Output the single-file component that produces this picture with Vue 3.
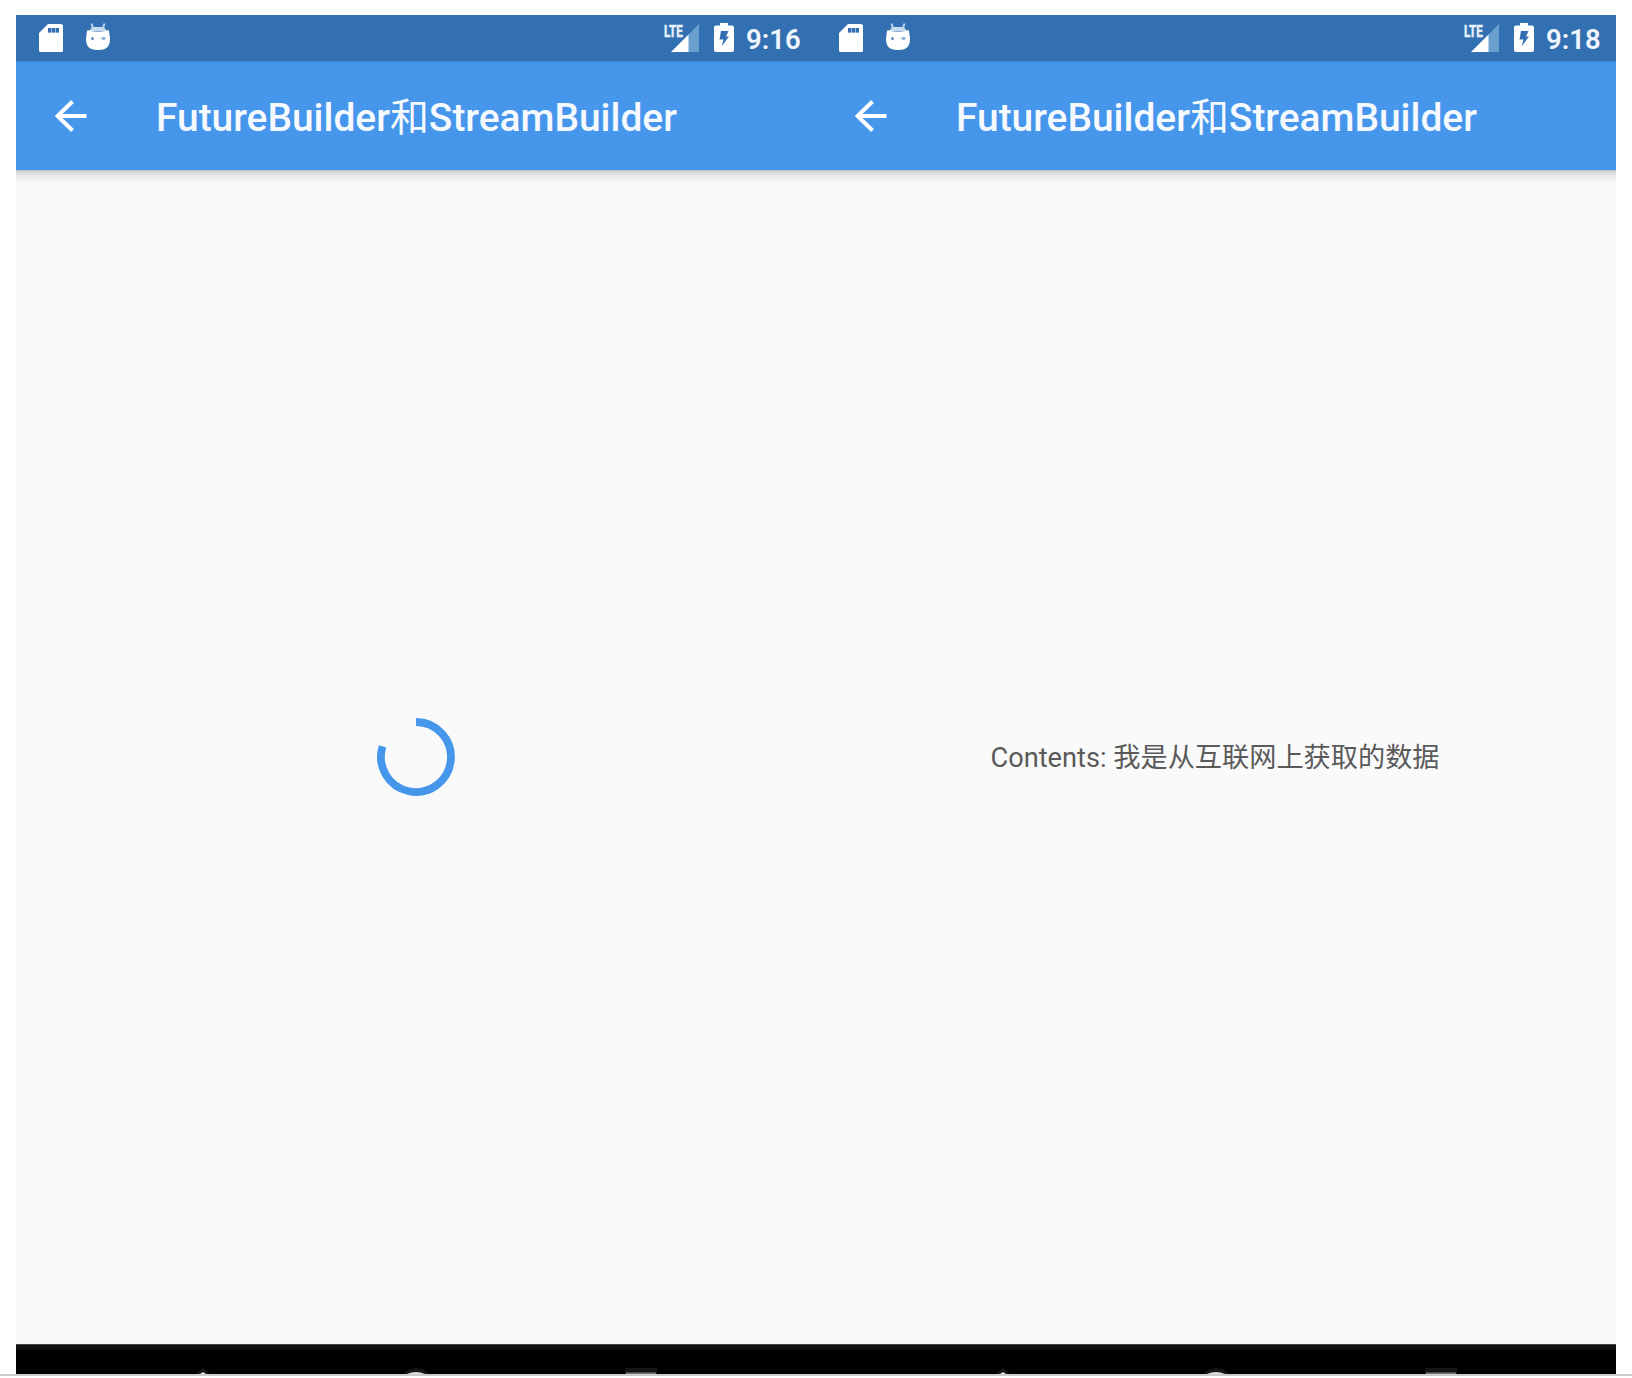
<script setup>
const screens = [
  { time: '9:16', loading: true },
  { time: '9:18', loading: false },
]
</script>

<template>
  <main class="page">
    <div class="screens">
      <section v-for="screen in screens" :key="screen.time" class="screen">
        <div class="status">
          <svg class="sd" width="24" height="28" viewBox="0 0 24 28">
            <path fill="#fff" fill-rule="evenodd" d="M9 0H22Q24 0 24 2V26.500Q24 28 22.500 28H1.500Q0 28 0 26.500V9ZM9 4V8.500H12V4ZM13 4V8.500H16V4ZM17 4V8.500H20V4Z" />
            <path fill="#3270b1" fill-opacity=".5" d="M9 4h11v4.500H9z" />
          </svg>
          <svg class="droid" width="24" height="27" viewBox="0 0 24 27">
            <path d="M5.500 0.500L7 5M18.500 0.500L17 5" stroke="#b9d3ea" stroke-width="2" />
            <path d="M6 4H18L21 8.500H3Z" fill="#c5dcef" />
            <path fill="#fff" d="M1 7.500Q3 7 5 8Q8 9 12 9Q16 9 19 8Q21 7 23 7.500L24 16Q24 27 13 27H11Q0 27 0 16Z" />
            <circle cx="6.500" cy="15.500" r="1.500" fill="#5c91c4" />
            <ellipse cx="17.500" cy="15.500" rx="2.200" ry="1.400" fill="#8ab2d9" />
          </svg>
          <span class="spacer"></span>
          <svg class="signal" width="36" height="28" viewBox="0 0 36 28">
            <path fill="#6a9fce" d="M35 0V28H24V11Z" />
            <path fill="#fff" d="M24.500 10.500V28H7Z" />
            <text x="0" y="12.800" fill="#e6effa" stroke="#e6effa" stroke-width=".5" font-size="16" font-weight="700" textLength="19" lengthAdjust="spacingAndGlyphs">LTE</text>
          </svg>
          <svg class="battery" width="20" height="29" viewBox="0 0 20 29">
            <path fill="#fff" d="M6 0H14V2.500H18Q20 2.500 20 4.500V27Q20 29 18 29H2Q0 29 0 27V4.500Q0 2.500 2 2.500H6Z" />
            <path fill="#3270b1" d="M7 8H14.500L12 13.500H15L7.500 23.500L9.500 16.500H5.500Z" />
          </svg>
          <span class="time">{{ screen.time }}</span>
        </div>
        <header class="bar">
          <svg class="back" width="32" height="32" viewBox="0 0 32 32">
            <path d="M17.500 1.500L2.500 16L17.500 30.500M2.500 16H31.500" fill="none" stroke="#fff" stroke-width="4" />
          </svg>
          <h1 class="title">FutureBuilder<span class="han">和</span>StreamBuilder</h1>
        </header>
        <div class="body">
          <svg v-if="screen.loading" width="80" height="80" viewBox="-40 -40 80 80">
            <path d="M0 -35A35 35 0 1 1 -33.400 -10.600" fill="none" stroke="#4696ec" stroke-width="7.800" />
          </svg>
          <p v-else class="contents">Contents: 我是从互联网上获取的数据</p>
        </div>
        <nav class="nav">
          <svg width="800" height="30" viewBox="0 0 800 30">
            <path fill="#151515" d="M180 30L187 23.500L194 30ZM387 30Q400 18 414 30ZM609 24H641V30H609Z" />
            <path fill="#ddd" d="M184 30Q187 26.500 190 30ZM391 30Q400 26 409 30Z" />
            <path fill="#777" d="M610 28.500H640V30H610Z" />
          </svg>
        </nav>
      </section>
    </div>
    <div class="rule"></div>
  </main>
</template>

<style>
body {
  margin: 0;
  background: #fff;
}
</style>

<style scoped>
.page {
  width: 1632px;
  height: 1378px;
  box-sizing: border-box;
  padding-top: 15px;
  overflow: hidden;
  background: #fff;
  font-family: Roboto, "Noto Sans CJK SC", sans-serif;
}
.screens {
  display: flex;
  margin: 0 16px;
}
.screen {
  width: 800px;
  height: 1359px;
  display: flex;
  flex-direction: column;
}
.status {
  height: 46px;
  box-sizing: border-box;
  padding: 8px 15px 0 23px;
  display: flex;
  align-items: flex-start;
  background: #3270b1;
}
.sd {
  margin-top: 1px;
}
.droid {
  margin-left: 23px;
}
.spacer {
  flex: 1;
}
.signal {
  margin-top: 1px;
  overflow: visible;
}
.battery {
  margin-left: 14px;
}
.time {
  margin: 1px 0 0 12px;
  width: 55px;
  font-size: 27.5px;
  font-weight: 600;
  line-height: 32px;
  white-space: nowrap;
  color: #f0f6fc;
}
.bar {
  height: 109px;
  flex: none;
  box-sizing: border-box;
  padding-left: 39px;
  display: flex;
  align-items: center;
  background: linear-gradient(#3d85d2 0, #4696ec 2px);
}
.back {
  flex: none;
}
.title {
  margin: 5px 0 0 69px;
  font-size: 38.9px;
  font-weight: 500;
  line-height: 46px;
  white-space: nowrap;
  color: #f6faff;
}
.han {
  font-weight: 400;
}
.body {
  flex: 1;
  display: flex;
  align-items: center;
  justify-content: center;
  background: linear-gradient(#b5bdc8 0, #d6d6d6 2px, #e8e8e8 6px, #f4f4f4 11px, #fafafa 17px);
}
.contents {
  margin: 2px 2px 0 0;
  font-size: 27.2px;
  line-height: 32px;
  white-space: nowrap;
  color: #5a5a5a;
}
.nav {
  height: 30px;
  flex: none;
  background: linear-gradient(#777 0, #101312 1px, #101312 5px, #000 6px);
}
.nav svg {
  display: block;
}
.rule {
  height: 2px;
  background: #ccc;
}
</style>
